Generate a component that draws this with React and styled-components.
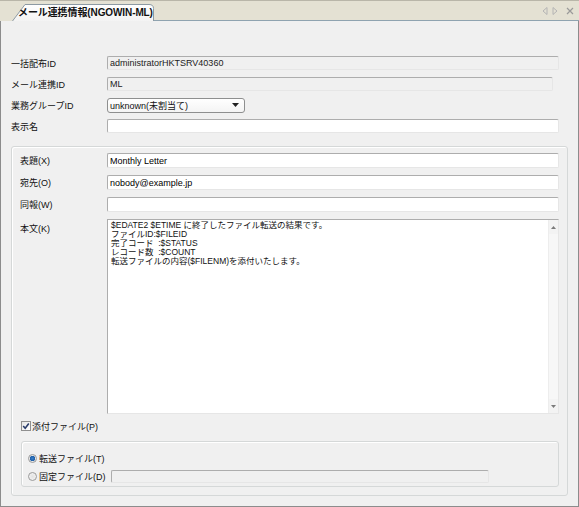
import React from 'react'
import styled, { createGlobalStyle } from 'styled-components'

const GlobalStyle = createGlobalStyle`
  html, body {
    margin: 0;
    padding: 0;
    background: #f0f0f0;
  }
  body {
    font-family: 'Liberation Sans', 'Noto Sans CJK JP', sans-serif;
    font-size: 9px;
    color: #111;
  }
  * {
    box-sizing: border-box;
  }
`

const BODY_TEXT = `$EDATE2 $ETIME に終了したファイル転送の結果です。
ファイルID:$FILEID
完了コード  :$STATUS
レコード数  :$COUNT
転送ファイルの内容($FILENM)を添付いたします。`

const App = () => {
  return (
    <>
      <GlobalStyle />
      <Window>
        <TabBar>
          <Tab>
            <TabShape width='143' height='17' viewBox='0 0 143 17'>
              <defs>
                <linearGradient id='tabFill' x1='0' y1='0' x2='0' y2='1'>
                  <stop offset='0' stopColor='#ffffff' />
                  <stop offset='1' stopColor='#f3f3f3' />
                </linearGradient>
              </defs>
              <path
                d='M0.5 17 L13 0.5 L137 0.5 Q141.5 0.5 141.5 4.5 L141.5 17'
                fill='url(#tabFill)'
                stroke='#8d9aa3'
              />
            </TabShape>
            <TabTitle>メール連携情報(NGOWIN-ML)</TabTitle>
          </Tab>
          <TabFiller>
            <TabIcons>
              <svg width='6' height='8' viewBox='0 0 6 8'>
                <path d='M5 0.5 L1 4 L5 7.5 Z' fill='none' stroke='#b4b4b4' />
              </svg>
              <svg width='6' height='8' viewBox='0 0 6 8'>
                <path d='M1 0.5 L5 4 L1 7.5 Z' fill='none' stroke='#b4b4b4' />
              </svg>
              <svg width='8' height='8' viewBox='0 0 8 8'>
                <path d='M1 1 L7 7 M7 1 L1 7' stroke='#9a9a9a' strokeWidth='1.2' />
              </svg>
            </TabIcons>
          </TabFiller>
        </TabBar>

        <Content>
          <TopFields>
            <Row>
              <Label $width={96}>一括配布ID</Label>
              <Field $disabled>administratorHKTSRV40360</Field>
            </Row>
            <Row>
              <Label $width={96}>メール連携ID</Label>
              <Field $disabled $width={446}>ML</Field>
            </Row>
            <Row>
              <Label $width={96}>業務グループID</Label>
              <Select>
                <span>unknown(未割当て)</span>
                <svg width='7' height='4' viewBox='0 0 7 4'>
                  <path d='M0 0 L7 0 L3.5 4 Z' fill='#222' />
                </svg>
              </Select>
            </Row>
            <Row>
              <Label $width={96}>表示名</Label>
              <Field />
            </Row>
          </TopFields>

          <GroupBox>
            <GroupRows>
              <Row $height={15}>
                <Label $width={87}>表題(X)</Label>
                <Field $height={15}>Monthly Letter</Field>
              </Row>
              <Row $height={15}>
                <Label $width={87}>宛先(O)</Label>
                <Field $height={15}>nobody@example.jp</Field>
              </Row>
              <Row $height={15}>
                <Label $width={87}>同報(W)</Label>
                <Field $height={15} />
              </Row>
              <TextRow>
                <Label $width={87}>本文(K)</Label>
                <TextArea>
                  <TextBody>{BODY_TEXT}</TextBody>
                  <ScrollBar>
                    <ScrollButton>
                      <svg width='5' height='3' viewBox='0 0 5 3'>
                        <path d='M0 3 L5 3 L2.5 0 Z' fill='#7a7a7a' />
                      </svg>
                    </ScrollButton>
                    <ScrollButton>
                      <svg width='5' height='3' viewBox='0 0 5 3'>
                        <path d='M0 0 L5 0 L2.5 3 Z' fill='#7a7a7a' />
                      </svg>
                    </ScrollButton>
                  </ScrollBar>
                </TextArea>
              </TextRow>
            </GroupRows>

            <CheckRow>
              <CheckBox>
                <svg width='8' height='8' viewBox='0 0 8 8'>
                  <path
                    d='M1.2 4 L3.2 6.2 L6.8 1.5'
                    fill='none'
                    stroke='#2b3d6b'
                    strokeWidth='1.6'
                  />
                </svg>
              </CheckBox>
              <span>添付ファイル(P)</span>
            </CheckRow>

            <InnerGroup>
              <RadioRow>
                <Radio $checked />
                <RadioLabel>転送ファイル(T)</RadioLabel>
              </RadioRow>
              <RadioRow>
                <Radio />
                <RadioLabel $width={70}>固定ファイル(D)</RadioLabel>
                <Field $disabled $height={13} $width={378} />
              </RadioRow>
            </InnerGroup>
          </GroupBox>
        </Content>
      </Window>
    </>
  )
}

export default App

export const Window = styled.div`
  width: 579px;
  height: 507px;
  display: flex;
  flex-direction: column;
  overflow: hidden;
`

export const TabBar = styled.div`
  height: 21px;
  flex-shrink: 0;
  display: flex;
  align-items: flex-end;
  background: #e4e1d3;
  border-top: 1px solid #b9b6a9;
  padding-left: 12px;
`

export const Tab = styled.div`
  position: relative;
  width: 142px;
  height: 17px;
  flex-shrink: 0;
`

export const TabShape = styled.svg`
  position: absolute;
  left: 0;
  top: 0;
`

export const TabTitle = styled.div`
  position: relative;
  padding-left: 6px;
  line-height: 17px;
  font-size: 10px;
  font-weight: bold;
  white-space: nowrap;
  letter-spacing: -0.1px;
`

export const TabFiller = styled.div`
  flex: 1;
  height: 100%;
  display: flex;
  align-items: center;
  justify-content: flex-end;
  border-bottom: 1px solid #8fa3b0;
  padding: 1px 5px 0 0;
`

export const TabIcons = styled.div`
  display: flex;
  align-items: center;
  gap: 4px;
  svg:last-child {
    margin-left: 4px;
  }
`

export const Content = styled.div`
  flex: 1;
  display: flex;
  flex-direction: column;
  border-left: 1px solid #8c8c8c;
  border-right: 1px solid #8c8c8c;
  border-bottom: 1px solid #8c8c8c;
  padding: 35px 10px 0 10px;
  background: #f0f0f0;
`

export const TopFields = styled.div`
  display: flex;
  flex-direction: column;
  gap: 7px;
  padding-right: 9px;
`

export const Row = styled.div`
  display: flex;
  align-items: center;
  height: ${(p) => p.$height || 14}px;
`

export const Label = styled.div`
  width: ${(p) => p.$width}px;
  flex-shrink: 0;
  white-space: nowrap;
`

export const Field = styled.div`
  height: ${(p) => p.$height || 14}px;
  ${(p) => (p.$width ? `width: ${p.$width}px;` : 'flex: 1;')}
  background: ${(p) => (p.$disabled ? '#f0f0f0' : '#ffffff')};
  border: 1px solid;
  border-color: #adadad #e6e6e6 #e6e6e6 #adadad;
  border-radius: 2px;
  padding: 0 2px;
  display: flex;
  align-items: center;
  white-space: nowrap;
  color: ${(p) => (p.$disabled ? '#222' : '#000')};
`

export const Select = styled.div`
  width: 138px;
  height: 15px;
  background: linear-gradient(#ffffff, #f4f4f4);
  border: 1px solid #8e8f8f;
  border-radius: 3px;
  display: flex;
  align-items: center;
  justify-content: space-between;
  padding: 0 5px 0 2px;
`

export const GroupBox = styled.div`
  margin-top: 13px;
  border: 1px solid #d5d8d8;
  border-radius: 3px;
  box-shadow: inset 1px 1px 0 #ffffff;
  padding: 6px 8px 8px 8px;
`

export const GroupRows = styled.div`
  display: flex;
  flex-direction: column;
  gap: 7px;
`

export const TextRow = styled.div`
  display: flex;
  align-items: flex-start;
  height: 195px;
  ${Label} {
    padding-top: 3px;
  }
`

export const TextArea = styled.div`
  flex: 1;
  height: 100%;
  display: flex;
  background: #ffffff;
  border: 1px solid;
  border-color: #adadad #e6e6e6 #e6e6e6 #adadad;
`

export const TextBody = styled.div`
  flex: 1;
  padding: 1px 3px;
  font-size: 8.5px;
  line-height: 9px;
  white-space: pre;
`

export const ScrollBar = styled.div`
  width: 10px;
  display: flex;
  flex-direction: column;
  justify-content: space-between;
  background: #f7f7f7;
  border-left: 1px solid #ededed;
`

export const ScrollButton = styled.div`
  height: 14px;
  display: flex;
  align-items: center;
  justify-content: center;
  background: #f3f3f3;
`

export const CheckRow = styled.div`
  display: flex;
  align-items: center;
  gap: 1px;
  margin: 7px 0 0 1px;
  height: 10px;
`

export const CheckBox = styled.div`
  width: 10px;
  height: 10px;
  border: 1px solid #8f8f8f;
  background: linear-gradient(135deg, #e6e6e6, #ffffff);
  display: flex;
  align-items: center;
  justify-content: center;
`

export const InnerGroup = styled.div`
  margin: 10px 0 0 1px;
  border: 1px solid #d5d8d8;
  border-radius: 3px;
  box-shadow: inset 1px 1px 0 #ffffff;
  padding: 9px 6px 3px 6px;
  display: flex;
  flex-direction: column;
  gap: 4px;
`

export const RadioRow = styled.div`
  display: flex;
  align-items: center;
  height: 14px;
  gap: 2px;
`

export const Radio = styled.div`
  width: 9px;
  height: 9px;
  border-radius: 50%;
  border: 1px solid #9a9a9a;
  background: ${(p) =>
    p.$checked
      ? 'radial-gradient(circle, #3a7fc8 0, #1f5fa8 2.5px, #e8e8e8 3px, #f6f6f6 100%)'
      : 'radial-gradient(circle, #e2e2e2 0, #f6f6f6 100%)'};
  flex-shrink: 0;
`

export const RadioLabel = styled.div`
  ${(p) => (p.$width ? `width: ${p.$width}px;` : '')}
  flex-shrink: 0;
  white-space: nowrap;
`
